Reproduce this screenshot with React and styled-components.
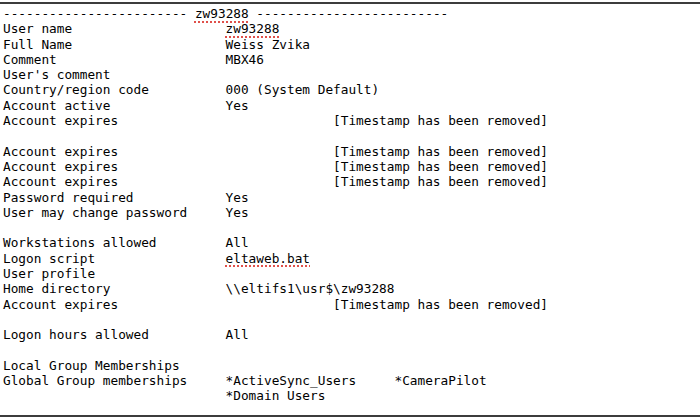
import React from 'react';
import styled, { createGlobalStyle } from 'styled-components';

const GlobalStyle = createGlobalStyle`
  html, body {
    margin: 0;
    padding: 0;
    background: #ffffff;
  }
`

const Page = styled.div`
  width: 700px;
  height: 418px;
  overflow: hidden;
  background: #ffffff;
  color: #000000;
  font-family: "DejaVu Sans Mono", "Liberation Mono", monospace;
  font-size: 12.75px;
  line-height: 15.3px;
  display: flex;
  flex-direction: column;
`

const Rule = styled.div`
  height: 2px;
  background: #3c3c3c;
  margin-top: ${props => props.top}px;
  margin-bottom: ${props => props.bottom}px;
  flex-shrink: 0;
`

const Output = styled.div`
  display: flex;
  flex-direction: column;
  padding-left: 3px;
  padding-top: 1px;
`

const Line = styled.div`
  display: grid;
  grid-template-columns: 29ch 1fr;
  height: 15.3px;
  white-space: pre;
`

const Header = styled.div`
  height: 15.3px;
  white-space: pre;
`

const Label = styled.span``

const Value = styled.span`
  padding-left: ${props => props.indent || 0}ch;
`

const Group = styled.span`
  display: inline-block;
  width: 22ch;
`

const Misspelled = styled.span`
  text-decoration: underline dotted #e0504a;
  text-decoration-thickness: 2px;
  text-underline-offset: 3px;
`

const rows = [
  { label: "User name", value: <Misspelled>zw93288</Misspelled> },
  { label: "Full Name", value: "Weiss Zvika" },
  { label: "Comment", value: "MBX46" },
  { label: "User's comment" },
  { label: "Country/region code", value: "000 (System Default)" },
  { label: "Account active", value: "Yes" },
  { label: "Account expires", value: "[Timestamp has been removed]", indent: 14 },
  null,
  { label: "Account expires", value: "[Timestamp has been removed]", indent: 14 },
  { label: "Account expires", value: "[Timestamp has been removed]", indent: 14 },
  { label: "Account expires", value: "[Timestamp has been removed]", indent: 14 },
  { label: "Password required", value: "Yes" },
  { label: "User may change password", value: "Yes" },
  null,
  { label: "Workstations allowed", value: "All" },
  { label: "Logon script", value: <Misspelled>eltaweb.bat</Misspelled> },
  { label: "User profile" },
  { label: "Home directory", value: "\\\\eltifs1\\usr$\\zw93288" },
  { label: "Account expires", value: "[Timestamp has been removed]", indent: 14 },
  null,
  { label: "Logon hours allowed", value: "All" },
  null,
  { label: "Local Group Memberships" },
  {
    label: "Global Group memberships",
    value: <><Group>*ActiveSync_Users</Group><Group>*CameraPilot</Group></>
  },
  { label: "", value: <Group>*Domain Users</Group> },
];

const App = () => {
  return (
    <Page>
      <GlobalStyle />
      <Rule top={2} bottom={1} />
      <Output>
        <Header>
          {"-".repeat(24)} <Misspelled>zw93288</Misspelled> {"-".repeat(25)}
        </Header>
        {rows.map((row, i) => (
          row ? (
            <Line key={i}>
              <Label>{row.label}</Label>
              <Value indent={row.indent}>{row.value}</Value>
            </Line>
          ) : (
            <Line key={i} />
          )
        ))}
      </Output>
      <Rule top={11} bottom={0} />
    </Page>
  )
}

export default App;
